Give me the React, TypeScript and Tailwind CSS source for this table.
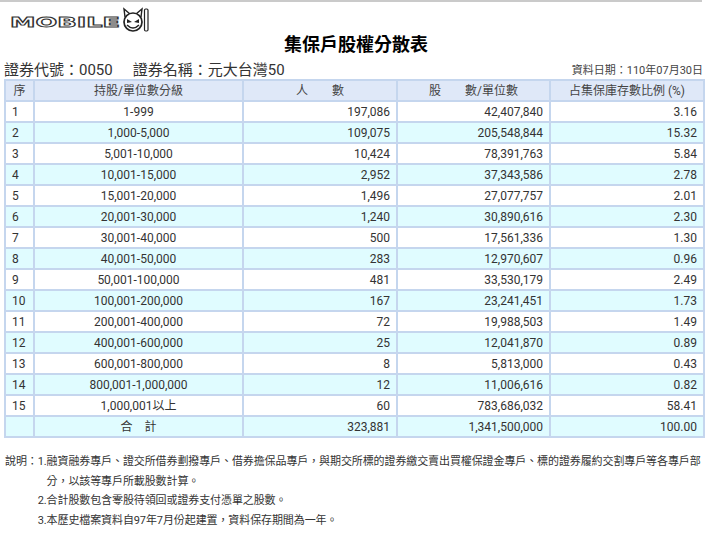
import React from 'react'

const rows: [string, string, string, string][] = [
  ['1-999', '197,086', '42,407,840', '3.16'],
  ['1,000-5,000', '109,075', '205,548,844', '15.32'],
  ['5,001-10,000', '10,424', '78,391,763', '5.84'],
  ['10,001-15,000', '2,952', '37,343,586', '2.78'],
  ['15,001-20,000', '1,496', '27,077,757', '2.01'],
  ['20,001-30,000', '1,240', '30,890,616', '2.30'],
  ['30,001-40,000', '500', '17,561,336', '1.30'],
  ['40,001-50,000', '283', '12,970,607', '0.96'],
  ['50,001-100,000', '481', '33,530,179', '2.49'],
  ['100,001-200,000', '167', '23,241,451', '1.73'],
  ['200,001-400,000', '72', '19,988,503', '1.49'],
  ['400,001-600,000', '25', '12,041,870', '0.89'],
  ['600,001-800,000', '8', '5,813,000', '0.43'],
  ['800,001-1,000,000', '12', '11,006,616', '0.82'],
  ['1,000,001以上', '60', '783,686,032', '58.41'],
]

const font = { fontFamily: 'Roboto, "Noto Sans CJK TC", sans-serif' }

function Logo() {
  return (
    <svg width="145" height="26" viewBox="0 0 145 26">
      <text
        x="3"
        y="20"
        textLength="110"
        lengthAdjust="spacingAndGlyphs"
        fontFamily="DejaVu Sans"
        fontWeight="bold"
        fontSize="14"
        fill="#fff"
        stroke="#333"
        strokeWidth="0.9"
      >
        MOBILE
      </text>
      <path d="M118 10 L117 2 L123 7 M134 10 L135 2 L129 7" fill="none" stroke="#222" strokeWidth="1.4" />
      <circle cx="126" cy="15" r="9" fill="#fff" stroke="#222" strokeWidth="1.7" />
      <path d="M120 12 L125 15 L120 16 Z M132 12 L127 15 L132 16 Z" fill="#222" />
      <path d="M120 18 Q126 24 132 18" fill="none" stroke="#222" strokeWidth="1.5" />
      <rect x="137.5" y="2" width="3.5" height="22" rx="1.2" fill="#fff" stroke="#222" strokeWidth="1.2" />
    </svg>
  )
}

export default function App() {
  const cell = 'border-2 border-[#c5d6ee] px-1.5 h-[21px]'
  return (
    <div className="w-[720px] h-[537px] bg-white text-[#333] overflow-hidden" style={font}>
      <div className="w-[702px] h-[2px] bg-[#cacaca]" />
      <div className="pl-[7px] pt-[5px]">
        <Logo />
      </div>
      <h1 className="text-center text-[18px] font-bold text-black leading-[22px] mt-[1px] pr-[8px]">
        集保戶股權分散表
      </h1>
      <div className="flex items-end justify-between w-[703px] pl-[4px] mt-[5px]">
        <div className="text-[15px] leading-[18px] text-[#333]">
          證券代號：0050<span className="ml-[20px]">證券名稱：元大台灣50</span>
        </div>
        <div className="text-[11px] leading-[16px] text-[#444]">資料日期：110年07月30日</div>
      </div>
      <table className="ml-[4px] w-[699px] border-collapse text-[12px] leading-[16px] text-[#333] table-fixed">
        <colgroup>
          <col className="w-[29px]" />
          <col className="w-[209px]" />
          <col className="w-[154px]" />
          <col className="w-[153px]" />
          <col className="w-[154px]" />
        </colgroup>
        <thead>
          <tr className="bg-[#dfe8f8] text-[#444]">
            <th className={`${cell} font-normal text-center`}>序</th>
            <th className={`${cell} font-normal text-center`}>持股/單位數分級</th>
            <th className={`${cell} font-normal text-center`}>人　　數</th>
            <th className={`${cell} font-normal text-center`}>股　　數/單位數</th>
            <th className={`${cell} font-normal text-center`}>占集保庫存數比例 (%)</th>
          </tr>
        </thead>
        <tbody>
          {rows.map((r, i) => (
            <tr key={i} className={i % 2 === 1 ? 'bg-[#e0fcff]' : 'bg-white'}>
              <td className={`${cell} text-left`}>{i + 1}</td>
              <td className={`${cell} text-center`}>{r[0]}</td>
              <td className={`${cell} text-right`}>{r[1]}</td>
              <td className={`${cell} text-right`}>{r[2]}</td>
              <td className={`${cell} text-right`}>{r[3]}</td>
            </tr>
          ))}
          <tr className="bg-[#e0fcff]">
            <td className={cell}></td>
            <td className={`${cell} text-center`}>合　計</td>
            <td className={`${cell} text-right`}>323,881</td>
            <td className={`${cell} text-right`}>1,341,500,000</td>
            <td className={`${cell} text-right`}>100.00</td>
          </tr>
        </tbody>
      </table>
      <div className="flex pl-[5px] mt-[14px] text-[11px] tracking-[-0.1px] leading-[19.5px] text-[#333] w-[712px]">
        <div className="shrink-0">說明：</div>
        <div className="flex flex-col">
          <div className="flex">
            <span className="shrink-0">1.</span>
            <span>融資融券專戶、證交所借券劃撥專戶、借券擔保品專戶，與期交所標的證券繳交賣出買權保證金專戶、標的證券履約交割專戶等各專戶部分，以該等專戶所載股數計算。</span>
          </div>
          <div>2.合計股數包含零股待領回或證券支付憑單之股數。</div>
          <div>3.本歷史檔案資料自97年7月份起建置，資料保存期間為一年。</div>
        </div>
      </div>
    </div>
  )
}
